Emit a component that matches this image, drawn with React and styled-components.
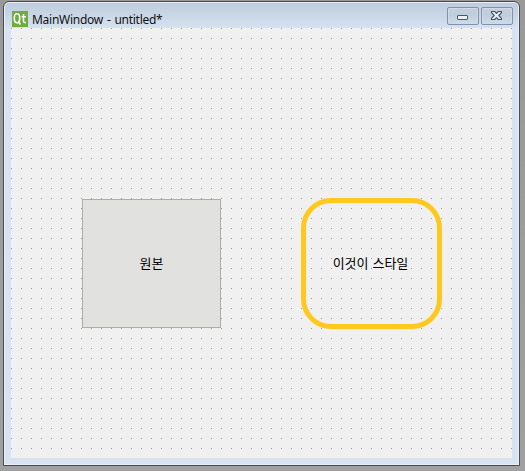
import React from "react";
import styled, { createGlobalStyle } from "styled-components";

const GlobalStyle = createGlobalStyle`
  * { box-sizing: border-box; }
  html, body { margin: 0; padding: 0; }
  body { background: #a0a0a0; overflow: hidden; }
`;

const Desktop = styled.main`
  width: 525px;
  height: 471px;
  padding: 1px 5px 5px 3px;
  background: linear-gradient(#999 0, #a0a0a0 100%);
`;

const Window = styled.section`
  display: flex;
  flex-direction: column;
  width: 517px;
  height: 465px;
  padding: 0 6px 6px;
  border: 1px solid #4b4b4f;
  border-radius: 6px 6px 0 0;
  background: linear-gradient(#bdcbda 0, #c8d6e5 13px, #d7e3f1 27px, #d7e3f1 100%);
  box-shadow: inset 0 0 0 1px #e9f0f8;
`;

const TitleBar = styled.header`
  display: flex;
  align-items: flex-start;
  height: 26px;
  flex: none;
`;

const Logo = styled.svg`
  width: 16px;
  height: 16px;
  margin: 9px 0 0 2px;
  flex: none;
`;

const Title = styled.h1`
  margin: 9px 0 0 4px;
  flex: 1;
  font: 400 12px/18px "Noto Sans", "Noto Sans CJK KR", sans-serif;
  letter-spacing: -0.27px;
  word-spacing: 1.1px;
  color: #111;
  white-space: nowrap;
`;

const Controls = styled.div`
  display: flex;
  gap: 2px;
  margin-top: 5px;
`;

const ControlButton = styled.button`
  display: flex;
  width: ${(p) => p.$width}px;
  height: 18px;
  padding: 0;
  border: 1px solid #8491ad;
  border-radius: 2px;
  background: linear-gradient(#c2cfdd, #c0cddc 45%, #cedbe9);
  box-shadow: inset 0 0 0 1px #d0dbe7;

  svg { display: block; margin: -1px 0 0 -1px; flex: none; }
`;

const Canvas = styled.div`
  display: grid;
  grid-template-columns: 139px 141px;
  align-content: start;
  align-items: center;
  column-gap: 80px;
  width: 501px;
  height: 430px;
  margin-left: 1px;
  padding: 170px 0 0 71px;
  background:
    linear-gradient(90deg, transparent 1px, #f0f0f0 1px) 0 0 / 10px 10px,
    linear-gradient(#979797 1px, #f0f0f0 1px) 0 0 / 10px 10px;
`;

const FormButton = styled.button`
  display: flex;
  align-items: center;
  justify-content: center;
  padding: 0 0 2px;
  font: 400 13px/18px "Noto Sans CJK KR", sans-serif;
  color: #000;
  white-space: nowrap;
`;

const PlainButton = styled(FormButton)`
  height: 129px;
  border: 1px solid #adadad;
  background: #e1e1df;
`;

const RoundedButton = styled(FormButton)`
  height: 131px;
  border: 5px solid #ffc81e;
  border-radius: 30px;
  padding-right: 2px;
  word-spacing: 1px;
  background: transparent;
`;

const QtLogo = () => (
  <Logo viewBox="0 0 16 16" aria-label="Qt">
    <rect width="16" height="16" fill="#6dad3b" />
    <path d="M6.9 11.5 8.5 13.5M5 2.8C2.9 2.8 2.3 4.4 2.3 7.3S2.9 11.8 5 11.8 7.7 10.3 7.7 7.3 7.1 2.8 5 2.8Z" fill="none" stroke="#fff" strokeWidth="1.6" />
    <path d="M11.5 3v7.3q0 1.6 2.4 1.2M9.6 5.8h4.3" fill="none" stroke="#fff" strokeWidth="1.5" />
  </Logo>
);

const MinimizeIcon = () => (
  <svg width="32" height="18" viewBox="0 0 32 18">
    <rect x="10.5" y="8.5" width="10" height="4" rx=".5" fill="#eeeeec" stroke="#415b69" />
  </svg>
);

const CloseIcon = () => (
  <svg width="32" height="18" viewBox="0 0 32 18">
    <path d="M10.5 4.5h3.2l1.8 1.9 1.8-1.9h3.2v1.2l-2.7 2.8 2.7 2.8v1.2h-3.2l-1.8-1.9-1.8 1.9h-3.2v-1.2l2.7-2.8-2.7-2.8Z" fill="#eeeeec" stroke="#40566a" strokeWidth="1.15" strokeLinejoin="round" />
  </svg>
);

export default function App() {
  return (
    <>
      <GlobalStyle />
      <Desktop>
        <Window>
          <TitleBar>
            <QtLogo />
            <Title>MainWindow - untitled*</Title>
            <Controls>
              <ControlButton $width={32} aria-label="Minimize"><MinimizeIcon /></ControlButton>
              <ControlButton $width={32} aria-label="Close"><CloseIcon /></ControlButton>
            </Controls>
          </TitleBar>
          <Canvas>
            <PlainButton>원본</PlainButton>
            <RoundedButton>이것이 스타일</RoundedButton>
          </Canvas>
        </Window>
      </Desktop>
    </>
  );
}
